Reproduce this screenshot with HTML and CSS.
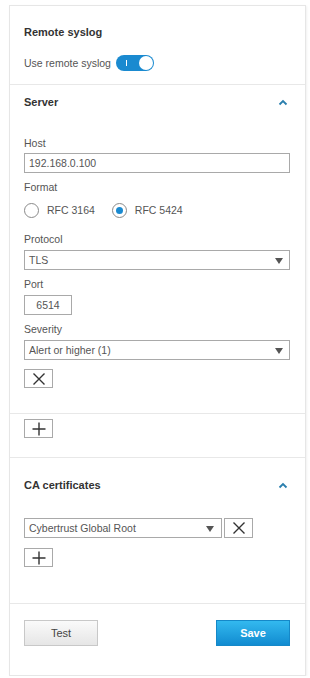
FILE: index.html
```html
<!DOCTYPE html>
<html lang="en">
<head>
  <meta charset="UTF-8" />
  <meta name="viewport" content="width=device-width, initial-scale=1.0"/>
  <title>Remote syslog</title>
  <link rel="stylesheet" href="styles.css">
</head>
<body>

  <div class="card">
    <!-- General -->
    <div class="section section-top">
      <h2 class="title">Remote syslog</h2>
      <div class="toggle-row">
        <span class="label">Use remote syslog</span>
        <span class="toggle"><span class="toggle-mark"></span><span class="toggle-knob"></span></span>
      </div>
    </div>

    <!-- Server -->
    <div class="section section-server">
      <div class="section-head">
        <h2 class="title">Server</h2>
        <svg class="chevron" width="10" height="7" viewBox="0 0 10 7"><path d="M1.5 5.5 L5 2 L8.5 5.5" fill="none" stroke="#2a7fae" stroke-width="1.8"/></svg>
      </div>

      <div class="field first">
        <span class="label">Host</span>
        <div class="input">192.168.0.100</div>
      </div>
      <div class="field">
        <span class="label">Format</span>
        <div class="radios">
          <span class="radio"></span><span class="radio-text">RFC 3164</span>
          <span class="radio checked"></span><span class="radio-text">RFC 5424</span>
        </div>
      </div>
      <div class="field gap-lg">
        <span class="label">Protocol</span>
        <div class="input select">TLS<span class="arrow"></span></div>
      </div>
      <div class="field">
        <span class="label">Port</span>
        <div class="input port">6514</div>
      </div>
      <div class="field">
        <span class="label">Severity</span>
        <div class="input select">Alert or higher (1)<span class="arrow"></span></div>
      </div>
      <button class="icon-btn remove">
        <svg width="14" height="14" viewBox="0 0 14 14"><path d="M1.5 1.5 L12.5 12.5 M12.5 1.5 L1.5 12.5" stroke="#333" stroke-width="1.4"/></svg>
      </button>
    </div>

    <div class="section section-add">
      <button class="icon-btn">
        <svg width="14" height="14" viewBox="0 0 14 14"><path d="M7 0.5 V13.5 M0.5 7 H13.5" stroke="#333" stroke-width="1.4"/></svg>
      </button>
    </div>

    <!-- CA certificates -->
    <div class="section section-ca">
      <div class="section-head">
        <h2 class="title">CA certificates</h2>
        <svg class="chevron" width="10" height="7" viewBox="0 0 10 7"><path d="M1.5 5.5 L5 2 L8.5 5.5" fill="none" stroke="#2a7fae" stroke-width="1.8"/></svg>
      </div>
      <div class="cert-row">
        <div class="input select cert">Cybertrust Global Root<span class="arrow"></span></div>
        <button class="icon-btn attached">
          <svg width="14" height="14" viewBox="0 0 14 14"><path d="M1.5 1.5 L12.5 12.5 M12.5 1.5 L1.5 12.5" stroke="#333" stroke-width="1.4"/></svg>
        </button>
      </div>
      <button class="icon-btn cert-add">
        <svg width="14" height="14" viewBox="0 0 14 14"><path d="M7 0.5 V13.5 M0.5 7 H13.5" stroke="#333" stroke-width="1.4"/></svg>
      </button>
    </div>

    <!-- Actions -->
    <div class="section footer">
      <button class="btn btn-test">Test</button>
      <button class="btn btn-save">Save</button>
    </div>
  </div>

</body>
</html>
```

FILE: styles.css
```css
* {
  box-sizing: border-box;
  margin: 0;
  padding: 0;
}

body {
  font-family: "Liberation Sans", Arial, sans-serif;
  background: white;
  color: #555;
}

.card {
  width: 297px;
  margin: 5px 0 0 9px;
  border: 1px solid #e6e6e6;
  box-shadow: 1px 1px 2px rgba(0, 0, 0, 0.06);
  background: white;
}

.section {
  padding: 0 15px 0 14px;
  border-top: 1px solid #e8e8e8;
}

.section-top {
  border-top: none;
  padding-top: 19px;
  padding-bottom: 13px;
}

.title {
  font-size: 11px;
  line-height: 14px;
  font-weight: bold;
  color: #333;
}

.label {
  display: block;
  font-size: 10.5px;
  line-height: 14px;
  color: #555;
}

.toggle-row {
  display: flex;
  align-items: center;
  gap: 5px;
  margin-top: 16px;
  height: 16px;
}

.toggle {
  position: relative;
  width: 38px;
  height: 16px;
  border-radius: 8px;
  background: #1a8ad0;
}

.toggle-mark {
  position: absolute;
  left: 10px;
  top: 5px;
  width: 1.5px;
  height: 6px;
  background: white;
}

.toggle-knob {
  position: absolute;
  right: 1px;
  top: 1px;
  width: 14px;
  height: 14px;
  border-radius: 50%;
  background: white;
}

.section-head {
  display: flex;
  justify-content: space-between;
  align-items: center;
}

.chevron {
  margin-right: 2px;
}

.section-server {
  padding-top: 10px;
  padding-bottom: 25px;
}

.field {
  margin-top: 7px;
}

.field.first {
  margin-top: 27px;
}

.field.gap-lg {
  margin-top: 14px;
}

.input {
  position: relative;
  height: 20px;
  margin-top: 3px;
  border: 1px solid #a9a9a9;
  font-size: 10.5px;
  line-height: 18px;
  padding-left: 4px;
  color: #555;
  background: white;
}

.select {
  margin-top: 4px;
}

.arrow {
  position: absolute;
  right: 6px;
  top: 7px;
  border-left: 4px solid transparent;
  border-right: 4px solid transparent;
  border-top: 6px solid #555;
}

.port {
  width: 48px;
  margin-top: 4px;
  text-align: center;
  padding-left: 0;
}

.radios {
  display: flex;
  align-items: center;
  height: 16px;
  margin-top: 8px;
}

.radio {
  width: 15px;
  height: 15px;
  border: 1px solid #8a8a8a;
  border-radius: 50%;
  position: relative;
}

.radio.checked::after {
  content: "";
  position: absolute;
  left: 3px;
  top: 3px;
  width: 7px;
  height: 7px;
  border-radius: 50%;
  background: #1a8ad0;
}

.radio-text {
  font-size: 10.5px;
  margin-left: 8px;
  margin-right: 17px;
}

.icon-btn {
  display: flex;
  align-items: center;
  justify-content: center;
  width: 29px;
  height: 19px;
  border: 1px solid #a9a9a9;
  background: white;
}

.remove {
  margin-top: 9px;
}

.section-add {
  padding-top: 5px;
  padding-bottom: 19px;
}

.section-ca {
  padding-top: 20px;
  padding-bottom: 36px;
}

.cert-row {
  display: flex;
  gap: 2px;
  margin-top: 26px;
}

.cert {
  width: 198px;
  margin-top: 0;
}

.cert .arrow {
  right: 7px;
}

.attached {
  height: 20px;
}

.cert-add {
  margin-top: 10px;
}

.footer {
  display: flex;
  justify-content: space-between;
  padding-top: 16px;
  padding-bottom: 29px;
}

.btn {
  width: 74px;
  height: 26px;
  font-family: "Liberation Sans", Arial, sans-serif;
  font-size: 11px;
}

.btn-test {
  border: 1px solid #c8c8c8;
  background: linear-gradient(#fafafa, #e6e6e6);
  color: #444;
}

.btn-save {
  border: 1px solid #1588c8;
  background: linear-gradient(#33b9ef, #118bd0);
  color: white;
  font-weight: bold;
}
```
